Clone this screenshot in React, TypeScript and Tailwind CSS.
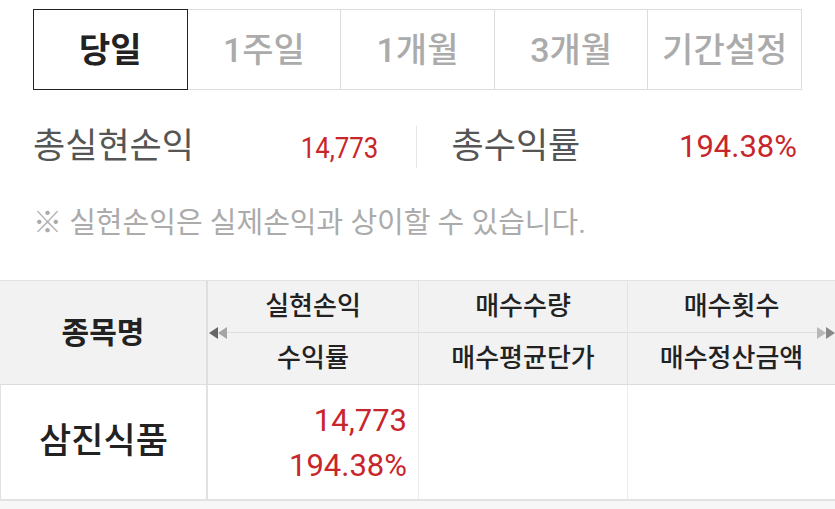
import React from 'react'

const tabs = ['당일', '1주일', '1개월', '3개월', '기간설정']

const fontStack = { fontFamily: 'Roboto, "Noto Sans CJK KR", sans-serif' }

function ArrowLeft() {
  return (
    <svg width="18" height="14" viewBox="0 0 18 14" className="block">
      <polygon points="0,7 9,1 9,13" fill="#666" />
      <polygon points="9,7 18,1 18,13" fill="#a5a5a5" />
    </svg>
  )
}

function ArrowRight() {
  return (
    <svg width="18" height="14" viewBox="0 0 18 14" className="block">
      <polygon points="0,1 9,7 0,13" fill="#b8b8b8" />
      <polygon points="9,1 18,7 9,13" fill="#888" />
    </svg>
  )
}

type Col = { top: string; bottom: string; width: string; line: string; pull: string; edge: string }

const cols: Col[] = [
  { top: '실현손익', bottom: '수익률', width: 'w-[210px]', line: 'ml-[18px]', pull: '-ml-[18px]', edge: '' },
  { top: '매수수량', bottom: '매수평균단가', width: 'w-[209px]', line: '', pull: '', edge: 'border-l' },
  { top: '매수횟수', bottom: '매수정산금액', width: 'flex-1', line: 'mr-[18px]', pull: '-mr-[18px]', edge: 'border-l' },
]

export default function App() {
  return (
    <div
      className="w-[835px] h-[509px] overflow-hidden bg-white flex flex-col"
      style={fontStack}
    >
      {/* 기간 탭 */}
      <div className="mt-[9px] mx-[33px] flex h-[81px]">
        {tabs.map((t, i) =>
          i === 0 ? (
            <div
              key={t}
              className="flex-1 flex items-center justify-center pt-[1px] border-[1.5px] border-[#222] text-[34px] font-bold text-[#222]"
            >
              {t}
            </div>
          ) : (
            <div
              key={t}
              className="flex-1 flex items-center justify-center pt-[1px] border-y border-r border-[#dcdcdc] text-[34px] font-medium text-[#ababab]"
            >
              {t}
            </div>
          )
        )}
      </div>

      {/* 합계 */}
      <div className="mt-[27px] mx-[33px] flex h-[60px] items-center">
        <div className="flex-1 flex items-center justify-between pr-[37px]">
          <span className="text-[35px] text-[#555]">총실현손익</span>
          <span className="text-[30px] text-[#c8262b] scale-x-[0.86] origin-right">
            14,773
          </span>
        </div>
        <div className="w-px h-[42px] bg-[#e6e6e6]" />
        <div className="flex-1 flex items-center justify-between pl-[35px] pr-[5px]">
          <span className="text-[35px] text-[#555]">총수익률</span>
          <span className="text-[31px] text-[#c8262b]">194.38%</span>
        </div>
      </div>

      <p className="mt-[27px] mx-[33px] text-[29px] leading-[38px] text-[#ababab]">
        ※ 실현손익은 실제손익과 상이할 수 있습니다.
      </p>

      {/* 종목별 테이블 */}
      <div className="mt-[38px] border-t border-[#e2e2e2]">
        <div className="flex bg-[#f2f2f2] h-[104px] border-b border-[#dcdcdc] relative">
          <div className="w-[208px] flex items-center justify-center border-r-2 border-[#dedede] text-[30px] font-bold text-[#222]">
            종목명
          </div>
          {cols.map((c) => (
            <div key={c.top} className={`${c.width} ${c.edge} border-[#e4e4e4] flex flex-col`}>
              <div className={`h-[52px] ${c.line} border-b border-[#dedede] flex items-center justify-center`}>
                <span className={`text-[26px] font-medium text-[#222] ${c.pull}`}>{c.top}</span>
              </div>
              <div className="flex-1 flex items-center justify-center text-[26px] font-medium text-[#222]">
                {c.bottom}
              </div>
            </div>
          ))}
          <div className="absolute left-[209px] top-[45px]">
            <ArrowLeft />
          </div>
          <div className="absolute right-0 top-[45px]">
            <ArrowRight />
          </div>
        </div>

        <div className="flex h-[116px] border-b-2 border-[#e2e2e2] border-l border-l-[#e2e2e2]">
          <div className="w-[207px] flex items-center justify-center border-r-2 border-[#e2e2e2] text-[35px] font-medium text-[#222]">
            삼진식품
          </div>
          <div className="w-[210px] flex flex-col items-end justify-center pr-[11px] pt-[2px] text-[31px] leading-[45px] text-[#c8262b]">
            <span>14,773</span>
            <span>194.38%</span>
          </div>
          <div className="w-[209px] border-l border-[#ececec]" />
          <div className="flex-1 border-l border-[#ececec]" />
        </div>
      </div>
      <div className="flex-1 bg-[#f7f7f7]" />
    </div>
  )
}
